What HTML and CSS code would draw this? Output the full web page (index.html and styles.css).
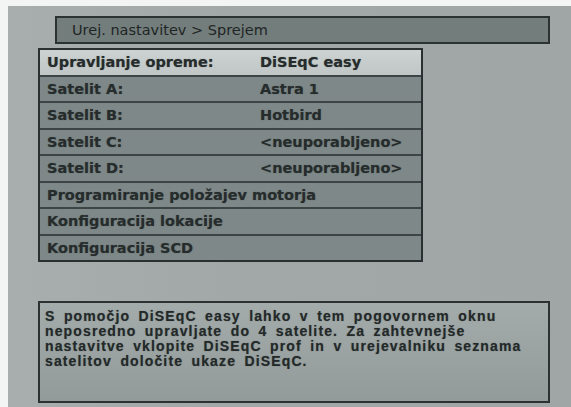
FILE: index.html
```html
<!DOCTYPE html>
<html>
<head>
<meta charset="utf-8">
<link rel="stylesheet" href="styles.css">
</head>
<body>
<div class="screen">
  <div class="header">Urej. nastavitev &gt; Sprejem</div>
  <div class="menu">
    <div class="row selected"><span class="label">Upravljanje opreme:</span><span class="value">DiSEqC easy</span></div>
    <div class="row"><span class="label">Satelit A:</span><span class="value">Astra 1</span></div>
    <div class="row"><span class="label">Satelit B:</span><span class="value">Hotbird</span></div>
    <div class="row"><span class="label">Satelit C:</span><span class="value">&lt;neuporabljeno&gt;</span></div>
    <div class="row"><span class="label">Satelit D:</span><span class="value">&lt;neuporabljeno&gt;</span></div>
    <div class="row"><span class="label">Programiranje položajev motorja</span></div>
    <div class="row"><span class="label">Konfiguracija lokacije</span></div>
    <div class="row"><span class="label">Konfiguracija SCD</span></div>
  </div>
  <div class="info">
    <div class="line">S pomočjo DiSEqC easy lahko v tem pogovornem oknu</div>
    <div class="line">neposredno upravljate do 4 satelite. Za zahtevnejše</div>
    <div class="line">nastavitve vklopite DiSEqC prof in v urejevalniku seznama</div>
    <div class="line">satelitov določite ukaze DiSEqC.</div>
  </div>
</div>
</body>
</html>
```
FILE: styles.css
```css
html, body {
  margin: 0;
  padding: 0;
  background: #f3f4f4;
  width: 571px;
  height: 407px;
  overflow: hidden;
}
.screen {
  margin: 6px 0 0 8px;
  height: 401px;
  background: linear-gradient(90deg, #a8aeae 0%, #a2a8a8 40%, #a0a6a6 100%);
  display: flex;
  flex-direction: column;
  padding-top: 10px;
  box-sizing: border-box;
  font-family: "DejaVu Sans", sans-serif;
  color: #252b2b;
}
.header {
  margin-left: 47px;
  width: 495px;
  height: 28px;
  box-sizing: border-box;
  border: 2px solid #2c3232;
  background: #737d7c;
  font-size: 14.5px;
  line-height: 24px;
  padding-left: 15px;
  color: #1f2525;
}
.menu {
  margin-top: 4px;
  margin-left: 30px;
  width: 385px;
  box-sizing: border-box;
  border: 2px solid #2a3030;
  display: flex;
  flex-direction: column;
  background: #3c4444;
  gap: 2px;
}
.row {
  height: 24.5px;
  display: flex;
  align-items: center;
  background: #7e8888;
  font-size: 14.5px;
  font-weight: bold;
  padding-left: 7px;
  color: #262c2c;
  text-shadow: 0 0 1px rgba(40,45,45,0.5);
}
.row.selected {
  background: linear-gradient(180deg, #cdd2d2 0%, #c0c6c6 100%);
}
.label {
  width: 213px;
  flex: none;
  white-space: nowrap;
}
.value {
  white-space: nowrap;
}
.info {
  margin-top: 39px;
  margin-left: 30px;
  width: 512px;
  height: 102px;
  box-sizing: border-box;
  border: 2px solid #2c3232;
  background: linear-gradient(180deg, #a4abab 0%, #929a9a 100%);
  font-family: "Liberation Sans", Arial, sans-serif;
  font-size: 14px;
  letter-spacing: 1.13px;
  word-spacing: 3.4px;
  font-weight: bold;
  padding: 5.5px 6px 0 5px;
  display: flex;
  flex-direction: column;
  color: #232929;
  text-shadow: 0 0 1px rgba(40,45,45,0.5);
}
.line {
  height: 15px;
  line-height: 15px;
  white-space: nowrap;
}
```
